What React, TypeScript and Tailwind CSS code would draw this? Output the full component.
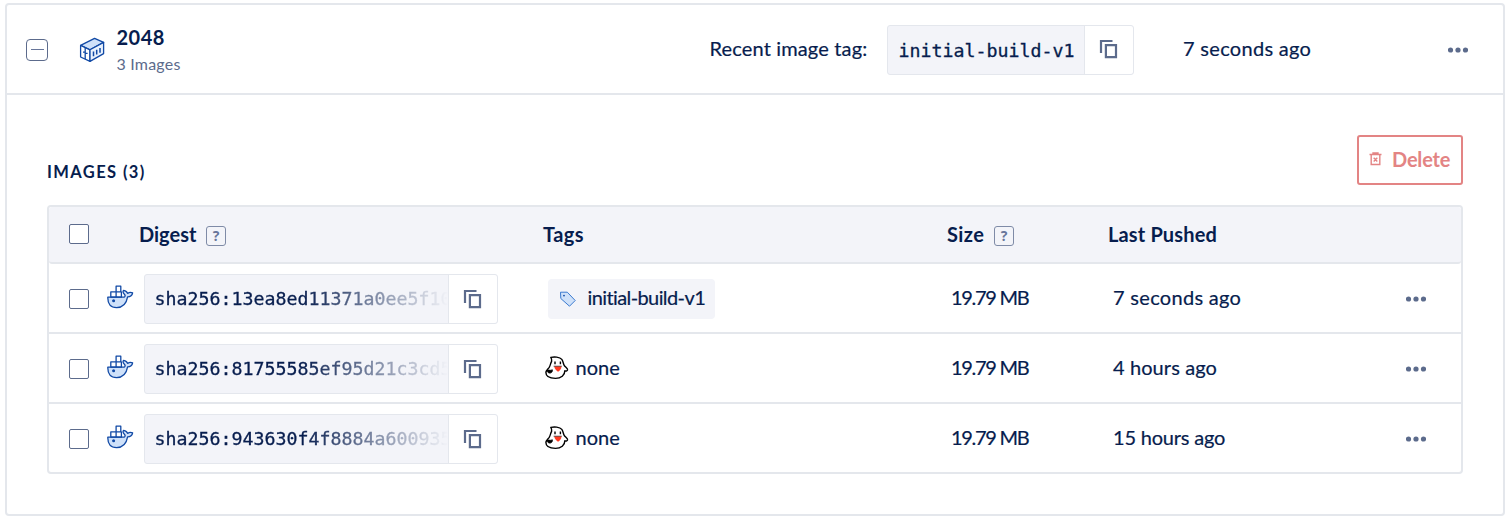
import React from "react";

const mono = "font-['DejaVu_Sans_Mono',monospace] text-[18.27px] [-webkit-text-stroke:0.3px_currentColor]";
const regular = "[-webkit-text-stroke:0.2px_currentColor]";

function CopyIcon() {
  return (
    <svg width="20" height="20" viewBox="0 0 20 20" fill="none" stroke="#5c6b8c" strokeWidth="2.2" className="-mt-px">
      <path d="M2 14V2H13.5" />
      <path d="M6.9 6.2H17V18.2H6.9Z" />
    </svg>
  );
}

function Dots() {
  return (
    <svg width="20" height="6" viewBox="0 0 20 6" fill="#5c6b8c" className="block">
      <circle cx="2.5" cy="3" r="2.6" />
      <circle cx="10" cy="3" r="2.6" />
      <circle cx="17.5" cy="3" r="2.6" />
    </svg>
  );
}

function ContainerIcon() {
  return (
    <svg width="26" height="26" viewBox="0 0 26 26" fill="none" stroke="#1149a5" strokeWidth="1.3" strokeLinejoin="round" className="block shrink-0">
      <path d="M1.6 8.4 15.6 1.4 24.6 5.4 11 12.8Z" fill="#cfe1f9" />
      <path d="M1.6 8.4 11 12.8V24.4L1.6 20Z" fill="#fff" />
      <path d="M11 12.8 24.6 5.4V16.6L11 24.4Z" fill="#e9f2fd" />
      <path d="M6.2 10.6V22M4 15.2H6M6.6 16.4H8.6" />
      <path d="M14.5 14.5V19.2M17.7 12.8V17.5M21 11V15.7" strokeWidth="1.5" />
    </svg>
  );
}

function WhaleIcon() {
  return (
    <svg width="27" height="24" viewBox="0 0 27 24" fill="none" stroke="#1149a5" strokeWidth="1.3" strokeLinejoin="round" className="block shrink-0">
      <path d="M.8 12.2H17.2C18.6 11.4 18.4 10 16.8 8.5C15.6 7 15.9 6.2 16.6 5.4C18.4 5.7 20.2 7 20.6 8.4C22.1 7.3 24.1 7.1 25.6 7.9C25.2 10.6 23.4 11.8 20.6 11.9C19.4 18.8 15.4 22.6 9.6 22.6C3.9 22.6 .6 19.4 .8 12.2Z" fill="#cfe1f9" />
      <path d="M3.8 6.8H9.1V12H3.8ZM9.1 6.8H14.4V12H9.1ZM9.1 1.2H13.8V6.8H9.1Z" fill="#fff" />
      <circle cx="6.6" cy="15.7" r="1.5" fill="#1149a5" stroke="none" />
    </svg>
  );
}

function TagIcon() {
  return (
    <svg width="18" height="18" viewBox="0 0 18 18" fill="none" className="block shrink-0">
      <path d="M1.5 2.2H8.3L16.2 10.5 10.5 16.2 1.8 8.5Z" fill="#cfe1f9" stroke="#3b7ad0" strokeWidth="1" strokeLinejoin="round" />
      <circle cx="5" cy="5.6" r="0.9" fill="#1149a5" />
    </svg>
  );
}

function GhostIcon() {
  return (
    <svg width="24" height="24" viewBox="0 0 24 24" fill="none" className="block shrink-0">
      <path d="M5.8 1.4C9 .7 14.8.8 16.8 3.4C18.4 5.6 18.2 8.4 19.6 10C21 11.6 22.8 12.6 22.6 13.9C22.2 15.1 20.8 15.2 19.8 14.8C20 19 16 22.4 10.5 22.4C5 22.4 .9 20.4 .9 16.6C.9 14.4 3 13.2 4.2 11.4C5.4 9.4 5.4 7.6 6.6 5.4C6.8 4 6.6 2.6 5.8 1.4Z" fill="#fff" stroke="#000" strokeWidth="1.4" strokeLinejoin="round" />
      <path d="M1.6 14.6C3.6 13.4 5 15 7.4 13.8C7.8 16 6 17.8 3.4 16.8Z" fill="#000" stroke="#000" strokeWidth=".8" />
      <path d="M10 5.6V8.2M15.4 5.6V8.2" stroke="#000" strokeWidth="1.4" />
      <path d="M9.2 10.3H16.6C16.4 13 14.5 15 13 15.8C11.4 14.6 9.4 13 9.2 10.3Z" fill="#ff3a22" />
      <path d="M8.6 10.2H16.8" stroke="#222" strokeWidth=".7" />
    </svg>
  );
}

function TrashIcon() {
  return (
    <svg width="13" height="14" viewBox="0 0 13 14" fill="none" stroke="#e38484" strokeWidth="1.4" className="-mt-[3px] block shrink-0">
      <path d="M.5 2.5H12.5M4 2.3V1H9V2.3M2.2 2.8V12.5H10.8V2.8M4.7 5.8 8.3 9.4M8.3 5.8 4.7 9.4" />
    </svg>
  );
}

function Check() {
  return <span className="size-5 shrink-0 rounded-[2px] border border-[#5c6b8c] bg-white" />;
}

function Help() {
  return (
    <span className="mt-1 flex size-5 items-center justify-center rounded-[3px] border-[1.5px] border-[#7f8ba7] font-['Open_Sans',sans-serif] text-[14px] leading-none font-bold tracking-normal text-[#68769a]">
      ?
    </span>
  );
}

function CopyCell() {
  return (
    <span className="flex w-[49px] items-center justify-center rounded-r-[3px] border-l border-[#e4e7ed] bg-white">
      <CopyIcon />
    </span>
  );
}

const rows = [
  { digest: "sha256:13ea8ed11371a0ee5f10", tag: "initial-build-v1", size: "19.79 MB", pushed: "7 seconds ago", tracking: "tracking-[0.3px]" },
  { digest: "sha256:81755585ef95d21c3cd5", tag: null, size: "19.79 MB", pushed: "4 hours ago", tracking: "tracking-[0.1px]" },
  { digest: "sha256:943630f4f8884a600935", tag: null, size: "19.79 MB", pushed: "15 hours ago", tracking: "tracking-[-0.2px]" },
];

export default function App() {
  return (
    <main className="h-[526px] w-[1508px] bg-white pt-[3px] pl-[5px] font-['Lato',sans-serif] text-[20px] font-normal text-[#071d4e]">
      <section className="h-[513px] w-[1500px] rounded-[4px] border-2 border-[#e4e7ec]">
        <header className="flex h-[90px] items-center border-b-2 border-[#e4e7ec]">
          <span className="mt-px ml-[19px] flex size-[22px] items-center justify-center rounded-[4px] border border-[#5c6b8c]">
            <span className="h-[1.5px] w-[13px] bg-[#68769a]" />
          </span>
          <span className="mt-[2px] ml-[31px]">
            <ContainerIcon />
          </span>
          <div className="ml-[11.5px] w-[593px]">
            <div className="mt-[2px] h-[26px] text-[20px] leading-[26px] font-bold tracking-[0.5px]">2048</div>
            <div className="mt-px h-[26px] text-[16px] leading-[26px] tracking-[0.2px] text-[#5c6b8c]">3 Images</div>
          </div>
          <span className={`${regular} -mt-[2px] w-[177.5px] tracking-[0.15px] whitespace-nowrap`}>Recent image tag:</span>
          <div className="mt-px flex h-[50px] w-[247px] rounded-[3px] border border-[#e4e7ed] bg-[#f3f4f9]">
            <span className={`${mono} w-[196px] pl-[10.5px] leading-[49px] whitespace-nowrap`}>initial-build-v1</span>
            <CopyCell />
          </div>
          <span className={`${regular} -mt-[2px] ml-[49px] w-[265px] tracking-[0.3px]`}>7 seconds ago</span>
          <span className="mt-[2px]">
            <Dots />
          </span>
        </header>

        <div className="pt-10 pl-10">
          <div className="flex h-[70px] w-[1416px] justify-between">
            <h2 className="mt-[27px] h-5 text-[16.5px] leading-5 font-bold tracking-[1.4px]">IMAGES (3)</h2>
            <button className="flex h-[50px] w-[106px] items-center rounded-[3px] border-2 border-[#e38484] pl-[10px] font-bold text-[#e38484]">
              <TrashIcon />
              <span className="-mt-[2px] ml-[10px] tracking-[-0.2px]">Delete</span>
            </button>
          </div>

          <div className="w-[1416px] rounded-[4px] border-2 border-[#e4e7ec]">
            <div className="flex h-[57px] items-center rounded-[3px] border-b-2 border-[#e4e7ec] bg-[#f3f4f9] pb-[2px] pl-5 font-bold tracking-[0.15px]">
              <Check />
              <div className="ml-[50px] flex w-[404px] items-center">
                <span className="w-[67px] tracking-normal">Digest</span>
                <Help />
              </div>
              <span className="w-[404px] tracking-[0.4px]">Tags</span>
              <div className="flex w-[161px] items-center">
                <span className="w-[47px] tracking-[0.4px]">Size</span>
                <Help />
              </div>
              <span>Last Pushed</span>
            </div>
            {rows.map((row) => (
              <div key={row.pushed} className={`${regular} flex h-[70px] items-center border-b-2 border-[#e4e7ec] pl-5 last:h-[68px] last:border-b-0`}>
                <span className="mt-[2px] flex">
                  <Check />
                </span>
                <span className="-mt-[2px] ml-[18px]">
                  <WhaleIcon />
                </span>
                <div className="mt-[2px] ml-[10px] flex h-[50px] w-[354px] rounded-[3px] border border-[#e4e7ed] bg-[#f3f4f9]">
                  <span
                    className={`${mono} w-[303px] overflow-hidden mask-[linear-gradient(to_right,#000_52%,transparent_100%)] pl-[9.5px] leading-[47px] whitespace-nowrap`}
                  >
                    {row.digest}
                  </span>
                  <CopyCell />
                </div>
                <div className="w-[453px]">
                  {row.tag ? (
                    <span className="mt-[2px] ml-[50px] flex h-10 w-[167px] items-center rounded-[4px] bg-[#f3f4f9] pl-[11px]">
                      <TagIcon />
                      <span className="-mt-[4px] ml-[10.5px] tracking-[-0.6px] whitespace-nowrap">{row.tag}</span>
                    </span>
                  ) : (
                    <span className="ml-[46.5px] flex items-center">
                      <GhostIcon />
                      <span className="-mt-[2px] ml-[7px]">none</span>
                    </span>
                  )}
                </div>
                <span className="-mt-[2px] w-[162px] tracking-[-1.3px]">{row.size}</span>
                <span className={`-mt-[2px] w-[293px] ${row.tracking}`}>{row.pushed}</span>
                <span className="mt-[2px]">
                  <Dots />
                </span>
              </div>
            ))}
          </div>
        </div>
      </section>
    </main>
  );
}
